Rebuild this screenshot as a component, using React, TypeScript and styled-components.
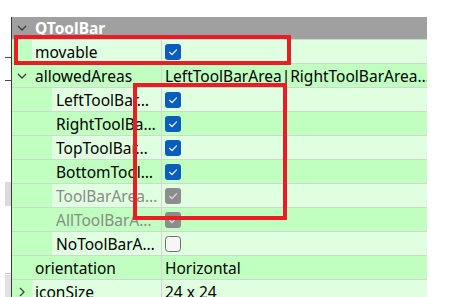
import styled, {createGlobalStyle, css} from "styled-components";

const GlobalStyle = createGlobalStyle`
  html, body {
    margin: 0;
    padding: 0;
    background: #ffffff;
  }
  body {
    font-family: "Noto Sans", "Liberation Sans", sans-serif;
  }
`

const LIGHT = '#e0ffe0';
const DARK = '#c0ffc0';
const GRID = '#d4d4d4';

const Page = styled.div`
  position: relative;
  width: 459px;
  height: 297px;
  overflow: hidden;
  display: flex;
  align-items: flex-start;
`

const Strip = styled.div`
  width: 11px;
  height: 297px;
  flex: none;
  display: flex;
  flex-direction: column;
  align-items: flex-end;
`

const StripGap = styled.div<{ h: number }>`
  flex: none;
  height: ${({h}) => h}px;
`

const StripMark = styled.div<{ h: number, color: string }>`
  flex: none;
  width: 6px;
  height: ${({h}) => h}px;
  background: ${({color}) => color};
`

const Tree = styled.div`
  margin-top: 17px;
  width: 416px;
  height: 280px;
  box-sizing: border-box;
  border-left: 1px solid #3a3a3a;
  display: flex;
  flex-direction: column;
  font-size: 15.5px;
  color: #000;
`

const HeaderRow = styled.div`
  flex: none;
  height: 22px;
  background: #a0a0a0;
  border-bottom: 1px solid ${GRID};
  display: flex;
  align-items: center;
  color: #ffffff;
  font-weight: bold;
`

const Row = styled.div<{ shade: 'light' | 'dark' }>`
  flex: none;
  height: 24px;
  box-sizing: border-box;
  border-bottom: 1px solid ${GRID};
  display: grid;
  grid-template-columns: 150px 1fr;
  background: ${({shade}) => shade === 'light' ? LIGHT : DARK};
`

const LabelCell = styled.div`
  display: flex;
  min-width: 0;
  border-right: 1px solid ${GRID};
`

const Indent = styled.div<{ level: number }>`
  flex: none;
  width: ${({level}) => 20 + level * 20}px;
  background: ${DARK};
  display: flex;
  align-items: center;
`

const Branch = styled.div`
  width: 20px;
  display: flex;
  align-items: center;
  justify-content: center;
`

const Label = styled.div<{ level: number, disabled?: boolean }>`
  flex: 1;
  min-width: 0;
  padding-left: ${({level}) => level ? 4 : 3}px;
  display: flex;
  align-items: center;
  white-space: nowrap;
  overflow: hidden;
  ${({disabled}) => disabled && css`
    color: #8a8a8a;
  `}
`

const HeaderLabel = styled.div`
  padding-left: 3px;
`

const ValueCell = styled.div`
  min-width: 0;
  padding-left: 3px;
  display: flex;
  align-items: center;
  white-space: nowrap;
  overflow: hidden;
`

const Mark = styled.div<{ left: number, top: number, width: number, height: number }>`
  position: absolute;
  left: ${({left}) => left}px;
  top: ${({top}) => top}px;
  width: ${({width}) => width}px;
  height: ${({height}) => height}px;
  box-sizing: border-box;
  border: 4px solid #ea1c24;
  pointer-events: none;
`

function Chevron({open, color = '#404040'}: { open: boolean, color?: string }) {
  return open ? (
    <svg width="10" height="6" viewBox="0 0 10 6">
      <path d="M1 1 L5 5 L9 1" fill="none" stroke={color} strokeWidth="1.3"/>
    </svg>
  ) : (
    <svg width="6" height="10" viewBox="0 0 6 10">
      <path d="M1 1 L5 5 L1 9" fill="none" stroke={color} strokeWidth="1.3"/>
    </svg>
  )
}

function CheckBox({checked, disabled}: { checked: boolean, disabled?: boolean }) {
  if (!checked) {
    return (
      <svg width="16" height="16" viewBox="0 0 16 16">
        <rect x="0.5" y="0.5" width="15" height="15" rx="3" fill="#f6f6f6" stroke="#6e6e6e"/>
      </svg>
    )
  }
  return (
    <svg width="16" height="16" viewBox="0 0 16 16">
      <rect x="0" y="0" width="16" height="16" rx="3" fill={disabled ? '#8c8c8c' : '#0a5cbf'}/>
      <path d="M4.6 8.3 L7 10.6 L11.5 5.9" fill="none" stroke={disabled ? '#e4e4e4' : '#ffffff'}
            strokeWidth="1.2" strokeLinecap="round" strokeLinejoin="round"/>
    </svg>
  )
}

type Prop = {
  name: string
  level: number
  branch?: 'open' | 'closed'
  disabled?: boolean
  check?: boolean
  text?: string
}

const props: Prop[] = [
  {name: 'movable', level: 0, check: true},
  {name: 'allowedAreas', level: 0, branch: 'open', text: 'LeftToolBarArea|RightToolBarArea…'},
  {name: 'LeftToolBar…', level: 1, check: true},
  {name: 'RightToolBa…', level: 1, check: true},
  {name: 'TopToolBar…', level: 1, check: true},
  {name: 'BottomTool…', level: 1, check: true},
  {name: 'ToolBarArea…', level: 1, check: true, disabled: true},
  {name: 'AllToolBarA…', level: 1, check: true, disabled: true},
  {name: 'NoToolBarA…', level: 1, check: false},
  {name: 'orientation', level: 0, text: 'Horizontal'},
  {name: 'iconSize', level: 0, branch: 'closed', text: '24 x 24'},
];

export default function App(): JSX.Element {
  return (
    <>
      <GlobalStyle/>
      <Page>
        <Strip>
          <StripGap h={57}/>
          <StripMark h={1} color="#4a4a4a"/>
          <StripGap h={22}/>
          <StripMark h={1} color="#4a4a4a"/>
          <StripGap h={101}/>
          <StripMark h={24} color="#dadada"/>
          <StripGap h={67}/>
          <StripMark h={1} color="#c8c8c8"/>
          <StripGap h={1}/>
          <StripMark h={23} color="#e2e2e2"/>
        </Strip>
        <Tree>
          <HeaderRow>
            <Branch><Chevron open color="#3c3c3c"/></Branch>
            <HeaderLabel>QToolBar</HeaderLabel>
          </HeaderRow>
          {props.map((p, i) => (
            <Row key={p.name} shade={i % 2 === 0 ? 'light' : 'dark'}>
              <LabelCell>
                <Indent level={p.level}>
                  {p.level === 0 &&
                  <Branch>
                    {p.branch && <Chevron open={p.branch === 'open'}/>}
                  </Branch>}
                </Indent>
                <Label level={p.level} disabled={p.disabled}>{p.name}</Label>
              </LabelCell>
              <ValueCell>
                {p.check !== undefined
                  ? <CheckBox checked={p.check} disabled={p.disabled}/>
                  : p.text}
              </ValueCell>
            </Row>
          ))}
        </Tree>
        <Mark left={14} top={35} width={277} height={30}/>
        <Mark left={133} top={83} width={154} height={137}/>
      </Page>
    </>
  )
}
